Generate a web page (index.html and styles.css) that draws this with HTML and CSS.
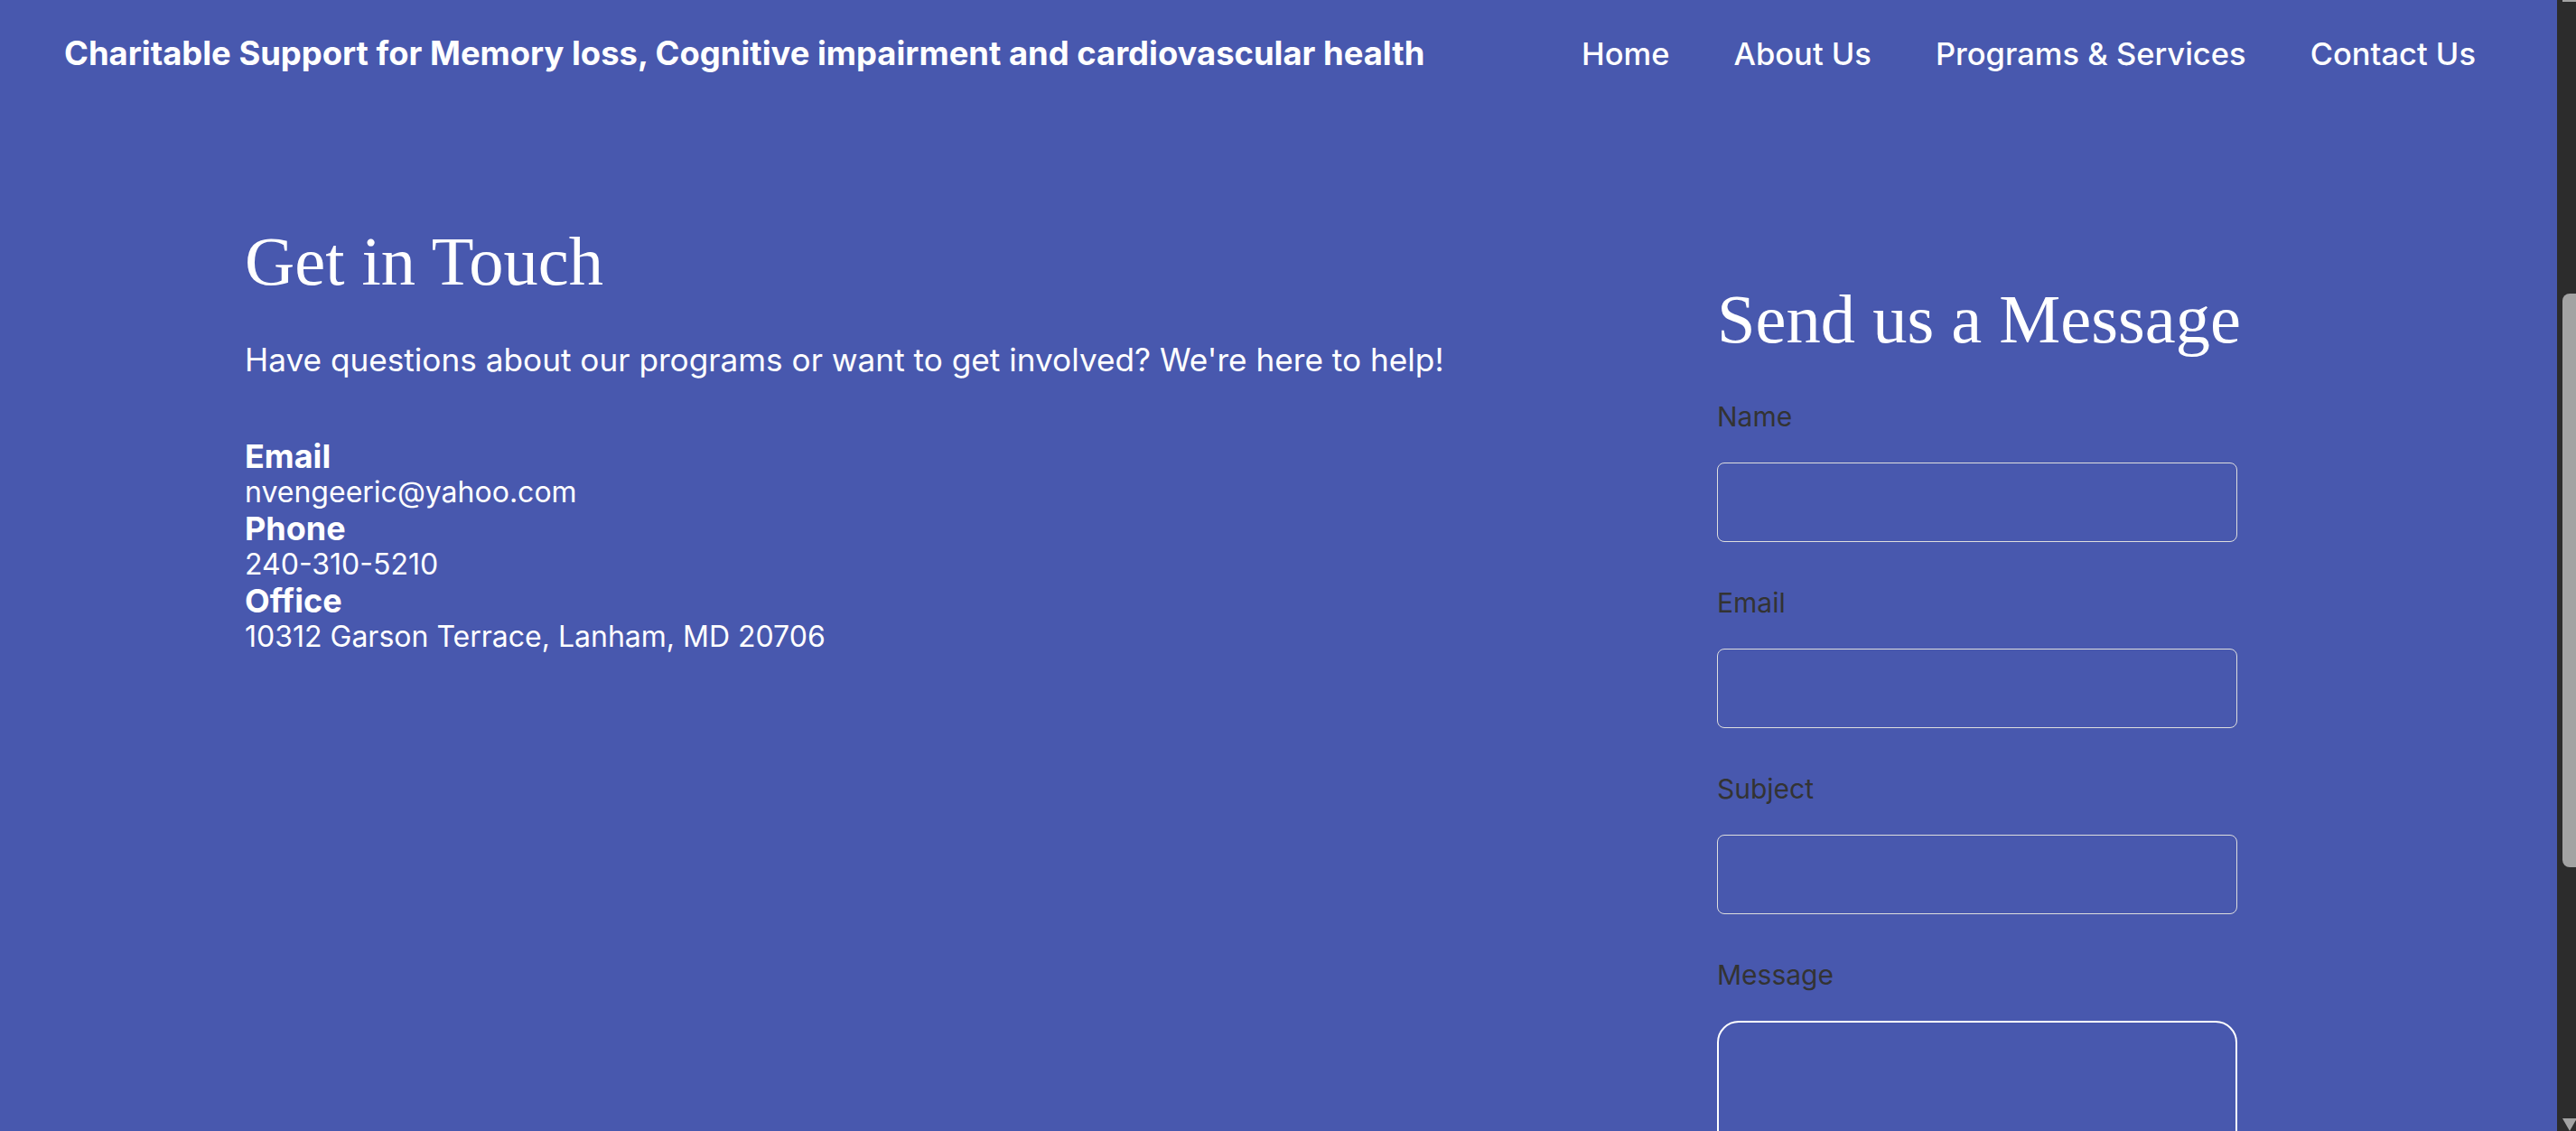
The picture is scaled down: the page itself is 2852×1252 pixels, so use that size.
FILE: index.html
```html
<!DOCTYPE html>
<html lang="en">
<head>
<meta charset="utf-8">
<title>Contact Us</title>
<link rel="stylesheet" href="styles.css">
</head>
<body>
<div class="window">
  <div class="page">
    <header class="site-header">
      <div class="brand">Charitable Support for Memory loss, Cognitive impairment and cardiovascular health</div>
      <nav class="nav">
        <a href="#">Home</a>
        <a href="#">About Us</a>
        <a href="#">Programs &amp; Services</a>
        <a href="#">Contact Us</a>
      </nav>
    </header>
    <main class="contact">
      <section class="info">
        <h1 class="heading">Get in Touch</h1>
        <p class="lead">Have questions about our programs or want to get involved? We're here to help!</p>
        <div class="details">
          <div class="detail-label">Email</div>
          <div class="detail-value">nvengeeric@yahoo.com</div>
          <div class="detail-label">Phone</div>
          <div class="detail-value">240-310-5210</div>
          <div class="detail-label">Office</div>
          <div class="detail-value">10312 Garson Terrace, Lanham, MD 20706</div>
        </div>
      </section>
      <section class="form-col">
        <h2 class="heading">Send us a Message</h2>
        <form class="form">
          <div class="field">
            <label class="field-label" for="name">Name</label>
            <input class="field-input" id="name" type="text">
          </div>
          <div class="field">
            <label class="field-label" for="email">Email</label>
            <input class="field-input" id="email" type="email">
          </div>
          <div class="field">
            <label class="field-label" for="subject">Subject</label>
            <input class="field-input" id="subject" type="text">
          </div>
          <div class="field">
            <label class="field-label" for="message">Message</label>
            <textarea class="field-textarea" id="message"></textarea>
          </div>
        </form>
      </section>
    </main>
  </div>
  <div class="scrollbar">
    <div class="scroll-up"></div>
    <div class="scroll-thumb"></div>
    <div class="scroll-down"></div>
  </div>
</div>
</body>
</html>
```

FILE: styles.css
```css
* { box-sizing: border-box; }

html, body {
  margin: 0;
  height: 1252px;
  overflow: hidden;
}

body {
  font-family: Inter, "Noto Sans", sans-serif;
  color: #ffffff;
  background: #4858ae;
}

.window {
  display: flex;
  height: 1252px;
}

.page {
  flex: 1;
  background: #4858ae;
  overflow: hidden;
}

/* Header */
.site-header {
  display: flex;
  justify-content: space-between;
  align-items: baseline;
  padding: 37px 90px 0 71px;
}

.brand {
  font-size: 36.4px;
  line-height: 44px;
  font-weight: 700;
}

.nav {
  display: flex;
  gap: 71px;
}

.nav a {
  color: #ffffff;
  text-decoration: none;
  font-size: 34.5px;
  line-height: 42px;
  font-weight: 500;
}

/* Main */
.contact {
  display: flex;
  justify-content: space-between;
  align-items: flex-start;
  padding: 165px 354px 0 271px;
}

.heading {
  margin: 0;
  font-family: "Liberation Serif", "Times New Roman", serif;
  font-weight: 400;
  font-size: 76.5px;
  line-height: 88px;
  color: #ffffff;
  white-space: nowrap;
}

.info {
  flex: 1;
}

.lead {
  margin: 40px 0 0;
  font-size: 35.2px;
  line-height: 49.5px;
}

.details {
  margin-top: 61px;
}

.detail-label {
  font-size: 36px;
  line-height: 40px;
  font-weight: 700;
}

.detail-value {
  font-size: 32px;
  line-height: 40px;
}

/* Form */
.form-col {
  width: 576px;
  padding-top: 64px;
}

.form {
  margin-top: 41px;
}

.field {
  display: flex;
  flex-direction: column;
  margin-bottom: 45px;
}

.field-label {
  font-size: 30px;
  line-height: 45px;
  color: #333333;
  margin-bottom: 28px;
}

.field-input {
  height: 88px;
  width: 100%;
  background: transparent;
  border: 1px solid #dedede;
  border-radius: 8px;
}

.field-textarea {
  height: 240px;
  width: 100%;
  background: transparent;
  border: 2px solid #ffffff;
  border-radius: 24px;
  resize: none;
}

/* Browser scrollbar strip */
.scrollbar {
  width: 21px;
  background: #2c2c2c;
  display: flex;
  flex-direction: column;
  padding-left: 6px;
}

.scroll-up {
  height: 2px;
  border-bottom: 2px solid #a3a3a3;
  width: 15px;
}

.scroll-thumb {
  margin-top: 323px;
  height: 635px;
  background: #a3a3a3;
  border-radius: 8px 0 0 8px;
}

.scroll-down {
  margin-top: auto;
  width: 0;
  height: 0;
  border-left: 8px solid transparent;
  border-right: 8px solid transparent;
  border-top: 14px solid #a3a3a3;
}
```
